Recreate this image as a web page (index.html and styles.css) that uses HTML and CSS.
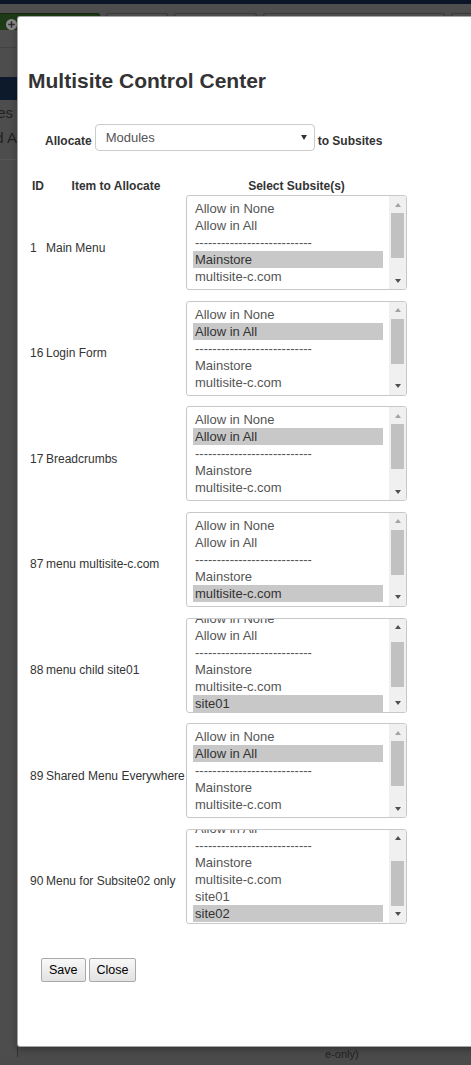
FILE: index.html
```html
<!DOCTYPE html>
<html>
<head>
<meta charset="utf-8">
<title>Multisite Control Center</title>
<link rel="stylesheet" href="styles.css">
</head>
<body>
<div class="page">
  <div class="topbar"></div>
  <div class="toolbar">
    <div class="tb-btn tb-new">
      <svg class="tb-icon" width="11" height="11" viewBox="0 0 11 11"><circle cx="5.5" cy="5.5" r="5.5" fill="#8a8a8a"/><path d="M5.5 2.3v6.4M2.3 5.5h6.4" stroke="#2c2c2c" stroke-width="1.6"/></svg>
    </div>
    <div class="tb-btn w62"></div>
    <div class="tb-btn w83"></div>
    <div class="tb-btn w182"></div>
    <div class="tb-btn w60"></div>
  </div>
  <div class="main">
    <div class="sidebar">
      <div class="sb-active"></div>
      <div class="sb-item sb-es"><span>Modules</span></div>
      <div class="sb-item sb-ar"><span>Featured Ar</span></div>
      <div class="sb-line"></div>
    </div>
    <div class="content">
      <div class="foot-text">e-only)</div>
    </div>
  </div>
</div>

<div class="modal">
  <h1 class="title">Multisite Control Center</h1>

  <div class="alloc">
    <span class="alloc-label">Allocate</span>
    <div class="select"><span>Modules</span><span class="select-arrow"></span></div>
    <span class="alloc-label">to Subsites</span>
  </div>

  <div class="table">
    <div class="trow thead">
      <div class="th">ID</div>
      <div class="th">Item to Allocate</div>
      <div class="th">Select Subsite(s)</div>
    </div>
    <div class="rows">
      <div class="trow">
        <div class="td">1</div>
        <div class="td">Main Menu</div>
        <div class="lb">
          <div class="lb-list"><div class="lb-inner">
            <div class="opt">Allow in None</div>
            <div class="opt">Allow in All</div>
            <div class="opt">---------------------------</div>
            <div class="opt sel">Mainstore</div>
            <div class="opt">multisite-c.com</div>
            <div class="opt">site01</div>
            <div class="opt">site02</div>
          </div></div>
          <div class="lb-sb">
            <div class="sb-btn"><span class="arr-up off"></span></div>
            <div class="sb-track"><div class="sb-thumb"></div></div>
            <div class="sb-btn"><span class="arr-down"></span></div>
          </div>
        </div>
      </div>

      <div class="trow">
        <div class="td">16</div>
        <div class="td">Login Form</div>
        <div class="lb">
          <div class="lb-list"><div class="lb-inner">
            <div class="opt">Allow in None</div>
            <div class="opt sel">Allow in All</div>
            <div class="opt">---------------------------</div>
            <div class="opt">Mainstore</div>
            <div class="opt">multisite-c.com</div>
            <div class="opt">site01</div>
            <div class="opt">site02</div>
          </div></div>
          <div class="lb-sb">
            <div class="sb-btn"><span class="arr-up off"></span></div>
            <div class="sb-track"><div class="sb-thumb"></div></div>
            <div class="sb-btn"><span class="arr-down"></span></div>
          </div>
        </div>
      </div>

      <div class="trow">
        <div class="td">17</div>
        <div class="td">Breadcrumbs</div>
        <div class="lb">
          <div class="lb-list"><div class="lb-inner">
            <div class="opt">Allow in None</div>
            <div class="opt sel">Allow in All</div>
            <div class="opt">---------------------------</div>
            <div class="opt">Mainstore</div>
            <div class="opt">multisite-c.com</div>
            <div class="opt">site01</div>
            <div class="opt">site02</div>
          </div></div>
          <div class="lb-sb">
            <div class="sb-btn"><span class="arr-up off"></span></div>
            <div class="sb-track"><div class="sb-thumb"></div></div>
            <div class="sb-btn"><span class="arr-down"></span></div>
          </div>
        </div>
      </div>

      <div class="trow">
        <div class="td">87</div>
        <div class="td">menu multisite-c.com</div>
        <div class="lb">
          <div class="lb-list"><div class="lb-inner">
            <div class="opt">Allow in None</div>
            <div class="opt">Allow in All</div>
            <div class="opt">---------------------------</div>
            <div class="opt">Mainstore</div>
            <div class="opt sel">multisite-c.com</div>
            <div class="opt">site01</div>
            <div class="opt">site02</div>
          </div></div>
          <div class="lb-sb">
            <div class="sb-btn"><span class="arr-up off"></span></div>
            <div class="sb-track"><div class="sb-thumb"></div></div>
            <div class="sb-btn"><span class="arr-down"></span></div>
          </div>
        </div>
      </div>

      <div class="trow">
        <div class="td">88</div>
        <div class="td">menu child site01</div>
        <div class="lb">
          <div class="lb-list"><div class="lb-inner scroll-13">
            <div class="opt">Allow in None</div>
            <div class="opt">Allow in All</div>
            <div class="opt">---------------------------</div>
            <div class="opt">Mainstore</div>
            <div class="opt">multisite-c.com</div>
            <div class="opt sel">site01</div>
            <div class="opt">site02</div>
          </div></div>
          <div class="lb-sb">
            <div class="sb-btn"><span class="arr-up"></span></div>
            <div class="sb-track"><div class="sb-thumb thumb-6"></div></div>
            <div class="sb-btn"><span class="arr-down"></span></div>
          </div>
        </div>
      </div>

      <div class="trow">
        <div class="td">89</div>
        <div class="td">Shared Menu Everywhere</div>
        <div class="lb">
          <div class="lb-list"><div class="lb-inner">
            <div class="opt">Allow in None</div>
            <div class="opt sel">Allow in All</div>
            <div class="opt">---------------------------</div>
            <div class="opt">Mainstore</div>
            <div class="opt">multisite-c.com</div>
            <div class="opt">site01</div>
            <div class="opt">site02</div>
          </div></div>
          <div class="lb-sb">
            <div class="sb-btn"><span class="arr-up off"></span></div>
            <div class="sb-track"><div class="sb-thumb"></div></div>
            <div class="sb-btn"><span class="arr-down"></span></div>
          </div>
        </div>
      </div>

      <div class="trow">
        <div class="td">90</div>
        <div class="td">Menu for Subsite02 only</div>
        <div class="lb">
          <div class="lb-list"><div class="lb-inner scroll-31">
            <div class="opt">Allow in None</div>
            <div class="opt">Allow in All</div>
            <div class="opt">---------------------------</div>
            <div class="opt">Mainstore</div>
            <div class="opt">multisite-c.com</div>
            <div class="opt">site01</div>
            <div class="opt sel">site02</div>
          </div></div>
          <div class="lb-sb">
            <div class="sb-btn"><span class="arr-up"></span></div>
            <div class="sb-track"><div class="sb-thumb thumb-14"></div></div>
            <div class="sb-btn"><span class="arr-down"></span></div>
          </div>
        </div>
      </div>
    </div>
  </div>

  <div class="actions">
    <button class="btn">Save</button>
    <button class="btn">Close</button>
  </div>
</div>
</body>
</html>
```

FILE: styles.css
```css
* { box-sizing: border-box; }

html, body {
  margin: 0;
  padding: 0;
  height: 1065px;
  overflow: hidden;
}

body {
  font-family: "Liberation Sans", Arial, sans-serif;
  background: #4b4b4b;
  position: relative;
}

/* ---------- dimmed background page ---------- */
.page {
  height: 1065px;
  display: flex;
  flex-direction: column;
}

.topbar {
  height: 4px;
  flex: none;
  background: #0b1528;
}

.toolbar {
  height: 44px;
  flex: none;
  background: #4e4e4e;
  border-bottom: 1px solid #424242;
  display: flex;
  gap: 6px;
  padding-top: 9px;
  align-items: flex-start;
  overflow: hidden;
}

.tb-btn {
  height: 17px;
  flex: none;
  border: 1px solid #3b3b3b;
  border-bottom: none;
  border-radius: 3px 3px 0 0;
  background: #525252;
}

.tb-new {
  width: 104px;
  margin-left: -4px;
  background: #1e3a16;
  border-color: #16290f;
  display: flex;
  align-items: flex-start;
}

.tb-icon {
  margin: 5px 0 0 9px;
  display: block;
}

.w62 { width: 62px; }
.w83 { width: 83px; }
.w182 { width: 182px; }
.w60 { width: 60px; }

.main {
  flex: 1;
  display: flex;
}

.sidebar {
  width: 18px;
  flex: none;
  border-right: 1px solid #333;
  margin-bottom: 8px;
  padding-top: 29px;
  overflow: hidden;
  background: #4d4d4d;
}

.sb-active {
  height: 23px;
  background: #0d1a2d;
}

.sb-item {
  font-size: 15px;
  line-height: 20px;
  color: #222;
  white-space: nowrap;
  display: flex;
  justify-content: flex-end;
}

.sb-es {
  margin-top: 3px;
  padding-right: 4px;
}

.sb-ar {
  margin-top: 5px;
}

.sb-ar span {
  margin-right: -5px;
}

.sb-line {
  margin-top: 11px;
  border-top: 1px solid #575757;
}

.content {
  flex: 1;
  display: flex;
  flex-direction: column;
  justify-content: flex-end;
}

.foot-text {
  padding-left: 307px;
  padding-bottom: 4px;
  font-size: 11px;
  line-height: 14px;
  color: #222;
}

/* ---------- modal ---------- */
.modal {
  position: absolute;
  left: 17px;
  top: 16px;
  width: 470px;
  height: 1031px;
  background: #fff;
  border: 1px solid rgba(0, 0, 0, 0.35);
  border-radius: 3px 0 0 3px;
  box-shadow: 0 3px 7px rgba(0, 0, 0, 0.3);
  padding: 51px 0 0 10px;
}

.title {
  margin: 0;
  font-size: 21px;
  line-height: 25px;
  font-weight: 700;
  color: #333;
}

.alloc {
  display: flex;
  align-items: flex-start;
  gap: 3px;
  margin: 31px 0 0 17px;
}

.alloc-label {
  font-size: 12px;
  line-height: 18px;
  font-weight: 700;
  color: #333;
  padding-top: 8px;
}

.select {
  width: 220px;
  height: 27px;
  border: 1px solid #ccc;
  border-radius: 4px;
  padding: 4px 7px 0 10px;
  display: flex;
  justify-content: space-between;
  align-items: flex-start;
  font-size: 13px;
  line-height: 18px;
  color: #555;
  background: #fff;
}

.select-arrow {
  width: 0;
  height: 0;
  border-left: 3px solid transparent;
  border-right: 3px solid transparent;
  border-top: 5px solid #333;
  margin-top: 6px;
}

.table {
  margin: 26px 0 0 2px;
  width: 377px;
}

.trow {
  display: grid;
  grid-template-columns: 16px 140px 221px;
  align-items: center;
}

.th {
  font-size: 12px;
  line-height: 18px;
  font-weight: 700;
  color: #333;
  text-align: center;
}

.rows {
  display: flex;
  flex-direction: column;
  gap: 0.67px;
}

.td {
  font-size: 12px;
  line-height: 18px;
  color: #333;
  white-space: nowrap;
}

/* listbox */
.lb {
  height: 95px;
  margin-bottom: 10px;
  border: 1px solid #c8c8c8;
  border-radius: 3px;
  display: flex;
  overflow: hidden;
  background: #fff;
}

.lb-list {
  flex: 1;
  overflow: hidden;
  padding: 4px 6px 0;
}

.scroll-13 { margin-top: -13px; }
.scroll-31 { margin-top: -31px; }

.opt {
  height: 17px;
  line-height: 17px;
  padding: 0 2px;
  font-size: 13px;
  color: #555;
  white-space: nowrap;
  overflow: hidden;
}

.opt.sel {
  background: #c8c8c8;
  color: #333;
}

.lb-sb {
  width: 17px;
  flex: none;
  background: #f0f0f0;
  display: flex;
  flex-direction: column;
}

.sb-btn {
  height: 17px;
  flex: none;
  display: flex;
  align-items: center;
  justify-content: center;
}

.arr-up {
  width: 0;
  height: 0;
  border-left: 3.5px solid transparent;
  border-right: 3.5px solid transparent;
  border-bottom: 4px solid #505050;
}

.arr-up.off {
  border-bottom-color: #a3a3a3;
}

.arr-down {
  width: 0;
  height: 0;
  border-left: 3.5px solid transparent;
  border-right: 3.5px solid transparent;
  border-top: 4px solid #505050;
}

.sb-track {
  flex: 1;
}

.sb-thumb {
  height: 45px;
  margin: 0 2px;
  background: #c1c1c1;
}

.thumb-6 { margin-top: 6px; }
.thumb-14 { margin-top: 14px; }

/* buttons */
.actions {
  display: flex;
  gap: 3px;
  margin: 24px 0 0 13px;
}

.btn {
  height: 24px;
  padding: 0 7px;
  border: 1px solid #a9a9a9;
  border-radius: 2px;
  background: linear-gradient(#f8f8f8, #e2e2e2);
  font-family: "Liberation Sans", Arial, sans-serif;
  font-size: 12.5px;
  color: #000;
}
```
